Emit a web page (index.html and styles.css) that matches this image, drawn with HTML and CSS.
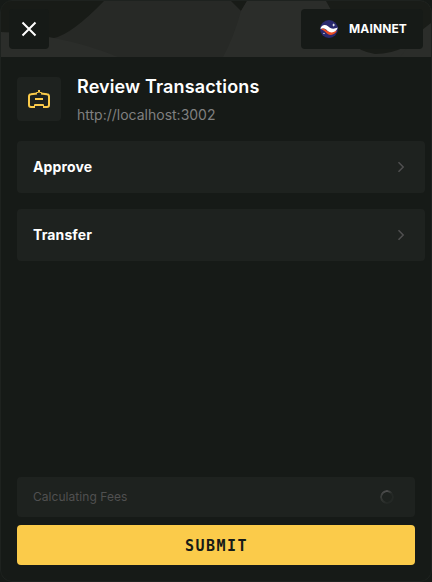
FILE: index.html
```html
<!DOCTYPE html>
<html lang="en">
<head>
<meta charset="utf-8">
<title>Review Transactions</title>
<link rel="stylesheet" href="styles.css">
</head>
<body>
<div class="modal">
  <header class="banner">
    <svg class="pattern" width="430" height="56" viewBox="1 1 430 56" aria-hidden="true">
      <rect x="1" y="1" width="430" height="56" fill="#272926"/>
      <path d="M1 32Q30 32 54 38Q90 45 118 57H1Z" fill="#2b2d2a"/>
      <path d="M1 1H104Q72 34 54 38Q30 32 1 32Z" fill="#181b17"/>
      <path d="M231 1H247L241 11Z" fill="#181b17"/>
      <path d="M247 1H431V57H223Q233 39 241 11Z" fill="#2b2d2a"/>
      <path d="M326 1H431V24Q408 54 375 54Q345 50 331 10Z" fill="#191c18"/>
      <path d="M422 30L431 23V57H400Z" fill="#2b2d2a"/>
    </svg>
    <button class="close" aria-label="Close">
      <svg width="16" height="16" viewBox="0 0 16 16"><path d="M1.5 1.5L14.5 14.5M14.5 1.5L1.5 14.5" stroke="#fff" stroke-width="2" fill="none"/></svg>
    </button>
    <button class="network">
      <svg width="18" height="18" viewBox="0 0 18 18">
        <circle cx="9" cy="9" r="9" fill="#29296e"/>
        <path d="M1.2 8.500C3 8 4.700 9 6.400 10.200C9 12.200 11.500 12.500 17 10.500C15 15 10.500 16 7.300 13.700C5 11.800 3.500 9.800 1.200 9.200Z" fill="#ec4b20"/>
        <path d="M.6 8C2 4.300 5.600 4.200 8 6.200C10.500 8.400 12.700 9.800 17.800 7.600C16 12.800 11 13.600 7.700 11C5.300 8.800 3.500 7.500 .6 9Z" fill="#fff"/>
        <path d="M13.7 3.3L14.2 4.500L15.4 5L14.2 5.500L13.7 6.700L13.2 5.500L12 5L13.2 4.500Z" fill="#fff"/>
        <circle cx="4" cy="13.4" r=".6" fill="#fff"/>
      </svg>
      <span>MAINNET</span>
    </button>
  </header>
  <section class="heading">
    <div class="app-icon">
      <svg width="22" height="18" viewBox="0 0 22 18" fill="none" stroke="#fbcb4a" stroke-width="2">
        <path d="M6.500 17H3Q1 17 1 15V6.500Q1 4.500 3 4.300L9 3.500M13 3.500L19 4.300Q21 4.500 21 6.500V15Q21 17 19 17H15.500"/>
        <path d="M11 0V2"/>
        <path d="M8 3L11 2L14 3" stroke-width="1"/>
        <path d="M7 9H15M6.500 15H15.500"/>
        <path d="M6.500 18V14.500M15.500 18V14.500" stroke-width="1"/>
      </svg>
    </div>
    <div>
      <h1>Review Transactions</h1>
      <p>http://localhost:3002</p>
    </div>
  </section>
  <main class="calls">
    <div class="call"><span>Approve</span><svg width="16" height="16" viewBox="0 0 16 16"><path d="M5.500 3.300L10.200 8L5.500 12.700" fill="none" stroke="#505050" stroke-width="1.500"/></svg></div>
    <div class="call"><span>Transfer</span><svg width="16" height="16" viewBox="0 0 16 16"><path d="M5.500 3.300L10.200 8L5.500 12.700" fill="none" stroke="#505050" stroke-width="1.500"/></svg></div>
  </main>
  <footer class="footer">
    <div class="fees"><span>Calculating Fees</span><i class="spinner"></i></div>
    <button class="submit">SUBMIT</button>
  </footer>
</div>
</body>
</html>
```
FILE: styles.css
```css
* { box-sizing: border-box; }
html { background: #161a17; }
body { margin: 0; background: #161a17; font-family: Inter, "Liberation Sans", sans-serif; color: #fff; }
button { border: 0; padding: 0; font: inherit; color: inherit; }
h1, p { margin: 0; }
svg { display: block; flex: none; }
.modal {
  display: flex;
  flex-direction: column;
  width: 432px;
  height: 582px;
  border: 1px solid #1e221f;
  border-radius: 12px;
  background: #161a17;
}
.banner {
  position: relative;
  display: flex;
  justify-content: space-between;
  height: 56px;
  flex: none;
  padding: 8px;
}
.pattern { position: absolute; inset: 0; border-radius: 11px 11px 0 0; }
.close, .network {
  position: relative;
  display: flex;
  align-items: center;
  justify-content: center;
  height: 40px;
  border-radius: 4px;
  background: #161a17;
}
.close { width: 40px; }
.network {
  width: 122px;
  gap: 11px;
  padding-left: 3px;
  padding-bottom: 1px;
  font-size: 12px;
  font-weight: 700;
  letter-spacing: 0.1px;
}
.network svg { position: relative; top: 0.5px; }
.heading { display: flex; gap: 16px; padding: 16px 16px 0; height: 84px; }
.app-icon {
  display: flex;
  align-items: center;
  justify-content: center;
  width: 44px;
  height: 44px;
  margin-top: 4px;
  border-radius: 4px;
  background: #1e221f;
}
h1 { font-size: 18px; line-height: 27px; font-weight: 600; letter-spacing: 0.13px; }
p { margin-top: 4px; font-size: 14px; line-height: 21px; color: #808080; }
.calls { display: flex; flex-direction: column; gap: 16px; padding: 0 6px 0 16px; }
.call {
  display: flex;
  align-items: center;
  justify-content: space-between;
  height: 52px;
  padding: 0 16px;
  border-radius: 4px;
  background: #1e221f;
  font-size: 14px;
  font-weight: 700;
  letter-spacing: 0.12px;
}
.call span { padding-bottom: 2px; }
.footer { display: flex; flex-direction: column; gap: 8px; margin-top: auto; padding: 0 16px 16px; }
.fees {
  display: flex;
  align-items: center;
  justify-content: space-between;
  height: 40px;
  padding: 0 21px 0 16px;
  border-radius: 4px;
  background: #1e221f;
  color: #505050;
  font-size: 12px;
  letter-spacing: 0.05px;
}
.fees span { padding-bottom: 2px; }
.spinner {
  width: 14px;
  height: 14px;
  border-radius: 50%;
  background: conic-gradient(#505050, #242825 15%, #242825 50%, #303330 65%, #505050);
  mask: radial-gradient(circle, transparent 4.5px, #000 5.2px);
}
.submit {
  height: 40px;
  padding-top: 1px;
  padding-left: 1px;
  border-radius: 4px;
  background: #fbcb4a;
  color: #161a17;
  font-family: "DejaVu Sans Mono", monospace;
  font-size: 15px;
  font-weight: 700;
  letter-spacing: 1.5px;
}
```
